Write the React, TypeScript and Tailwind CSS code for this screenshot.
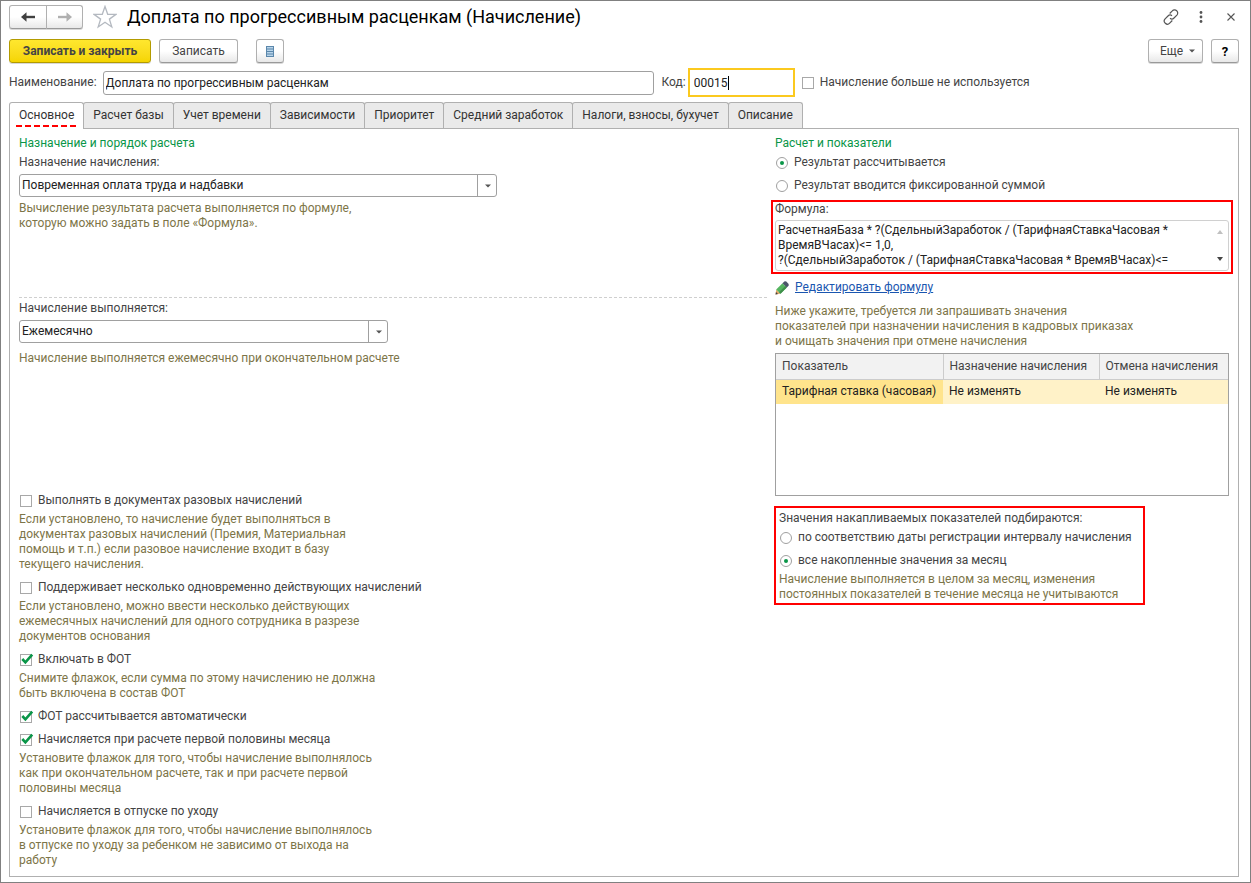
import React, { ReactNode, useId, useState } from 'react';

const TABS = [
  'Основное',
  'Расчет базы',
  'Учет времени',
  'Зависимости',
  'Приоритет',
  'Средний заработок',
  'Налоги, взносы, бухучет',
  'Описание'
];

const FORMULA = `РасчетнаяБаза * ?(СдельныйЗаработок / (ТарифнаяСтавкаЧасовая *
ВремяВЧасах)<= 1,0,
?(СдельныйЗаработок / (ТарифнаяСтавкаЧасовая * ВремяВЧасах)<=`;

const BUTTON =
  'h-6 rounded-[3px] border border-[#b0b0b0] border-b-[#999999] bg-linear-to-b from-white from-50% to-[#e8e8e8] shadow-[0_1px_0_#d8d8d8] text-[#444444] flex items-center justify-center cursor-pointer';

function Caret() {
  return (
    <svg width="6" height="4" viewBox="0 0 6 4" className="shrink-0">
      <path d="M0 0.5h6L3 3.5z" fill="#555555" />
    </svg>
  );
}

function Hint({ children }: { children: ReactNode }) {
  return <p className="whitespace-pre-line text-[#7d7548]">{children}</p>;
}

interface CheckProps {
  label: string;
  checked?: boolean;
  hint?: string;
}

function Check({ label, checked = false, hint }: CheckProps) {
  const [on, setOn] = useState(checked);

  return (
    <div className="flex flex-col gap-1">
      <label className="flex items-center gap-1.5 pl-px cursor-pointer">
        <span className="relative flex shrink-0">
          <input
            type="checkbox"
            checked={on}
            onChange={() => setOn(!on)}
            className="size-3 appearance-none border border-[#a8a8a8] bg-white"
          />
          {on && (
            <svg
              width="14"
              height="14"
              viewBox="0 0 14 14"
              className="pointer-events-none absolute bottom-0 left-0"
            >
              <path d="M2.3 7L5.4 10.4L12.2 2.6" fill="none" stroke="#0a9648" strokeWidth="2.6" />
            </svg>
          )}
        </span>
        {label}
      </label>
      {hint && <Hint>{hint}</Hint>}
    </div>
  );
}

interface RadioProps {
  name: string;
  label: string;
  defaultChecked?: boolean;
}

function Radio({ name, label, defaultChecked }: RadioProps) {
  return (
    <label className="flex items-center gap-1.5 pl-px cursor-pointer">
      <span className="grid shrink-0 place-items-center">
        <input
          type="radio"
          name={name}
          defaultChecked={defaultChecked}
          className="peer col-start-1 row-start-1 size-3 appearance-none rounded-full border border-[#a0a0a0] bg-white"
        />
        <span className="pointer-events-none col-start-1 row-start-1 hidden size-1 rounded-full bg-[#0a9648] peer-checked:block" />
      </span>
      {label}
    </label>
  );
}

interface SelectProps {
  label: string;
  value: string;
  className: string;
}

function Select({ label, value, className }: SelectProps) {
  const id = useId();

  return (
    <div className="flex flex-col gap-1">
      <label htmlFor={id}>{label}</label>
      <div className={`relative h-[23px] max-w-full ${className}`}>
        <select
          id={id}
          className="size-full appearance-none rounded-[3px] border border-[#a0a0a0] bg-white pl-0.5 pr-6 text-[#222222]"
        >
          <option>{value}</option>
        </select>
        <span className="pointer-events-none absolute inset-y-0 right-0 flex w-5 items-center justify-center border-l border-[#a0a0a0]">
          <Caret />
        </span>
      </div>
    </div>
  );
}

function Header() {
  return (
    <header className="flex items-center">
      <div className="flex">
        <button aria-label="Назад" className={`${BUTTON} w-[38px] rounded-r-none`}>
          <svg width="14" height="10" viewBox="0 0 14 10">
            <path d="M0 5L5.5 0.3V9.7Z" fill="#404040" />
            <path d="M4 5H14" stroke="#404040" strokeWidth="2.4" />
          </svg>
        </button>
        <button aria-label="Вперед" className={`${BUTTON} -ml-px w-[37px] rounded-l-none`}>
          <svg width="14" height="10" viewBox="0 0 14 10">
            <path d="M14 5L8.5 0.3V9.7Z" fill="#b0b0b0" />
            <path d="M10 5H0" stroke="#b0b0b0" strokeWidth="2.4" />
          </svg>
        </button>
      </div>
      <button aria-label="В избранное" className="ml-2.5 cursor-pointer">
        <svg width="24" height="24" viewBox="0 0 24 24" className="block">
          <path
            d="M12 1.5L14.7 9.3H23L16.4 14.1L18.8 22L12 17.3L5.2 22L7.6 14.1L1 9.3H9.3Z"
            fill="none"
            stroke="#b4b9c0"
            strokeWidth="1.3"
          />
        </svg>
      </button>
      <h1 className="ml-2.5 text-[18px] leading-6 text-black">
        Доплата по прогрессивным расценкам (Начисление)
      </h1>
      <div className="ml-auto flex items-center">
        <button aria-label="Получить ссылку" className="cursor-pointer">
          <svg width="16" height="16" viewBox="0 0 16 16" fill="none" stroke="#555555" strokeWidth="1.2">
            <path d="M6.7 4.5L9.3 1.9a3 3 0 0 1 4.6 4.2L11 9a3 3 0 0 1-4 .3" />
            <path d="M9.3 11.5L6.7 14.1a3 3 0 0 1-4.6-4.2L5 7a3 3 0 0 1 4-.3" />
          </svg>
        </button>
        <button aria-label="Меню" className="ml-5 cursor-pointer">
          <svg width="4" height="12" viewBox="0 0 4 12" fill="#555555">
            <circle cx="2" cy="1.5" r="1.4" />
            <circle cx="2" cy="6" r="1.4" />
            <circle cx="2" cy="10.5" r="1.4" />
          </svg>
        </button>
        <button aria-label="Закрыть" className="ml-6 mr-1 cursor-pointer">
          <svg width="8" height="8" viewBox="0 0 8 8">
            <path d="M0.5 0.5L7.5 7.5M7.5 0.5L0.5 7.5" stroke="#555555" strokeWidth="1.1" />
          </svg>
        </button>
      </div>
    </header>
  );
}

function Toolbar() {
  return (
    <div className="mt-2.5 flex items-center">
      <button className="h-6 w-[142px] cursor-pointer rounded-[3px] border border-[#b39b00] bg-linear-to-b from-[#ffe72e] to-[#f5d500] font-bold text-[#444444] shadow-[0_1px_0_#d8d8d8]">
        Записать и закрыть
      </button>
      <button className={`${BUTTON} ml-2 w-[79px]`}>Записать</button>
      <button aria-label="Список" className={`${BUTTON} ml-[18px] w-7`}>
        <svg width="8" height="11" viewBox="0 0 8 11">
          <rect x="0.5" y="0.5" width="7" height="10" fill="#b8d4ea" stroke="#5b87ab" />
          <path d="M1 3h6M1 5.5h6M1 8h6" stroke="#5b87ab" />
        </svg>
      </button>
      <button className={`${BUTTON} ml-auto w-[55px] gap-1.5 pl-1`}>
        Еще <Caret />
      </button>
      <button aria-label="Справка" className={`${BUTTON} ml-2 w-7 text-[13px] font-bold text-black`}>
        ?
      </button>
    </div>
  );
}

function NameRow() {
  return (
    <div className="mt-[5px] flex h-[29px] items-center">
      <label htmlFor="name">Наименование:</label>
      <input
        id="name"
        defaultValue="Доплата по прогрессивным расценкам"
        className="ml-1.5 h-6 w-[551px] min-w-0 rounded-[3px] border border-[#a0a0a0] px-0.5 text-[#222222]"
      />
      <label htmlFor="code" className="ml-2">
        Код:
      </label>
      <span className="relative ml-0.5 flex">
        <input
          id="code"
          defaultValue="00015"
          className="h-[29px] w-[107px] border-2 border-[#fbc91f] px-1 text-[#222222] outline-none"
        />
        <span className="pointer-events-none absolute left-10 top-2 h-3.5 w-px bg-black" />
      </span>
      <div className="ml-1.5">
        <Check label="Начисление больше не используется" />
      </div>
    </div>
  );
}

function Tabs() {
  return (
    <div role="tablist" className="mt-[5px] flex">
      {TABS.map((tab, i) =>
        i === 0 ? (
          <button
            key={tab}
            role="tab"
            aria-selected
            className="relative z-10 -mb-px h-[27px] rounded-t-[3px] border border-b-0 border-[#b0b0b0] bg-white px-[9px] pb-0.5 text-[#333333]"
          >
            {tab}
            <svg width="61" height="2" className="absolute bottom-0.5 left-1.5">
              <path d="M0 1H61" stroke="#ff0000" strokeWidth="2" strokeDasharray="6 3" />
            </svg>
          </button>
        ) : (
          <button
            key={tab}
            role="tab"
            aria-selected={false}
            className="-ml-px h-[26px] cursor-pointer rounded-t-[3px] border border-b-0 border-[#b0b0b0] bg-[#eaeaea] px-[9px] text-[#333333]"
          >
            {tab}
          </button>
        )
      )}
    </div>
  );
}

function LeftColumn() {
  return (
    <div className="min-w-0 flex-1">
      <section className="flex h-[162px] flex-col gap-1 border-b border-dashed border-[#cfcfcf]">
        <h2 className="text-[#0a9648]">Назначение и порядок расчета</h2>
        <Select
          label="Назначение начисления:"
          value="Повременная оплата труда и надбавки"
          className="w-[478px]"
        />
        <Hint>{'Вычисление результата расчета выполняется по формуле,\nкоторую можно задать в поле «Формула».'}</Hint>
      </section>

      <section className="flex h-[195px] flex-col gap-2 pt-[3px]">
        <Select label="Начисление выполняется:" value="Ежемесячно" className="w-[369px]" />
        <Hint>Начисление выполняется ежемесячно при окончательном расчете</Hint>
      </section>

      <section className="flex flex-col gap-2">
        <Check
          label="Выполнять в документах разовых начислений"
          hint={
            'Если установлено, то начисление будет выполняться в\nдокументах разовых начислений (Премия, Материальная\nпомощь и т.п.) если разовое начисление входит в базу\nтекущего начисления.'
          }
        />
        <Check
          label="Поддерживает несколько одновременно действующих начислений"
          hint={
            'Если установлено, можно ввести несколько действующих\nежемесячных начислений для одного сотрудника в разрезе\nдокументов основания'
          }
        />
        <Check
          label="Включать в ФОТ"
          checked
          hint={'Снимите флажок, если сумма по этому начислению не должна\nбыть включена в состав ФОТ'}
        />
        <Check label="ФОТ рассчитывается автоматически" checked />
        <Check
          label="Начисляется при расчете первой половины месяца"
          checked
          hint={
            'Установите флажок для того, чтобы начисление выполнялось\nкак при окончательном расчете, так и при расчете первой\nполовины месяца'
          }
        />
        <Check
          label="Начисляется в отпуске по уходу"
          hint={
            'Установите флажок для того, чтобы начисление выполнялось\nв отпуске по уходу за ребенком не зависимо от выхода на\nработу'
          }
        />
      </section>
    </div>
  );
}

function IndicatorTable() {
  return (
    <div className="mt-1 h-[143px] border border-[#a0a0a0]">
      <table className="w-full table-fixed border-collapse text-left whitespace-nowrap">
        <thead>
          <tr className="h-[25px] border-b border-[#cccccc] bg-[#f2f2f2]">
            <th className="w-[167px] border-r border-[#cccccc] pl-1.5 font-normal">Показатель</th>
            <th className="w-[156px] border-r border-[#cccccc] pl-1.5 font-normal">Назначение начисления</th>
            <th className="pl-1.5 font-normal">Отмена начисления</th>
          </tr>
        </thead>
        <tbody>
          <tr className="h-[25px] bg-[#fff2c8] text-[#222222]">
            <td className="bg-[#ffe48c] pl-1.5">Тарифная ставка (часовая)</td>
            <td className="pl-1.5">Не изменять</td>
            <td className="pl-1.5">Не изменять</td>
          </tr>
        </tbody>
      </table>
    </div>
  );
}

function RightColumn() {
  return (
    <div className="w-[454px] shrink-0">
      <h2 className="text-[#0a9648]">Расчет и показатели</h2>
      <div className="mt-1 flex flex-col gap-2">
        <Radio name="result" label="Результат рассчитывается" defaultChecked />
        <Radio name="result" label="Результат вводится фиксированной суммой" />
      </div>

      <div className="-mx-1 mt-[7px] border-2 border-[#ff0000] px-0.5 pb-px">
        <label htmlFor="formula" className="block">
          Формула:
        </label>
        <div className="relative mt-[3px]">
          <textarea
            id="formula"
            defaultValue={FORMULA}
            wrap="off"
            className="block h-[51px] w-full resize-none overflow-hidden rounded-[3px] border border-[#d0d0d0] px-0.5 pt-0.5 text-[#222222]"
          />
          <svg width="6" height="4" viewBox="0 0 6 4" className="absolute right-1.5 top-2.5">
            <path d="M0 4h6L3 0z" fill="#c0c0c0" />
          </svg>
          <svg width="6" height="4" viewBox="0 0 6 4" className="absolute bottom-2.5 right-1.5">
            <path d="M0 0h6L3 4z" fill="#444444" />
          </svg>
        </div>
      </div>

      <div className="mt-1.5 flex items-center gap-1.5">
        <svg width="14" height="14" viewBox="0 0 14 14">
          <path d="M0.5 13.5L1.2 8.5L5.5 12.8Z" fill="#e0a868" />
          <path d="M0.5 13.5L1 11L3 13.1Z" fill="#404040" />
          <path d="M1.2 8.5L7.5 2.2L11.8 6.5L5.5 12.8Z" fill="#55b560" />
          <path d="M4 11.3L10.3 5L11.8 6.5L5.5 12.8Z" fill="#3f8f4a" />
          <path d="M7.5 2.2L9.3 0.4Q10.3 0 11.3 0.6L13.4 2.7Q14 3.6 13.6 4.7L11.8 6.5Z" fill="#4a5568" />
        </svg>
        <a href="#formula" className="text-[#1a56b0] underline">
          Редактировать формулу
        </a>
      </div>

      <div className="mt-[9px]">
        <Hint>
          {
            'Ниже укажите, требуется ли запрашивать значения\nпоказателей при назначении начисления в кадровых приказах\nи очищать значения при отмене начисления'
          }
        </Hint>
      </div>

      <IndicatorTable />

      <fieldset className="-ml-px mt-2.5 w-[371px] border-2 border-[#ff0000] px-[3px] pb-px pt-[3px]">
        <p>Значения накапливаемых показателей подбираются:</p>
        <div className="my-1 flex flex-col gap-2 whitespace-nowrap">
          <Radio name="accumulated" label="по соответствию даты регистрации интервалу начисления" />
          <Radio name="accumulated" label="все накопленные значения за месяц" defaultChecked />
        </div>
        <Hint>{'Начисление выполняется в целом за месяц, изменения\nпостоянных показателей в течение месяца не учитываются'}</Hint>
      </fieldset>
    </div>
  );
}

export default function App() {
  return (
    <div className="flex min-h-screen flex-col border border-[#808080] bg-white px-2 pb-[5px] pt-1 pr-[11px] font-[Roboto,'Liberation_Sans',sans-serif] text-[12px] leading-[15px] text-[#444444]">
      <Header />
      <Toolbar />
      <NameRow />
      <Tabs />
      <main className="flex flex-1 gap-2 border border-[#b0b0b0] px-[9px] pb-2 pt-[7px]">
        <LeftColumn />
        <RightColumn />
      </main>
    </div>
  );
}
